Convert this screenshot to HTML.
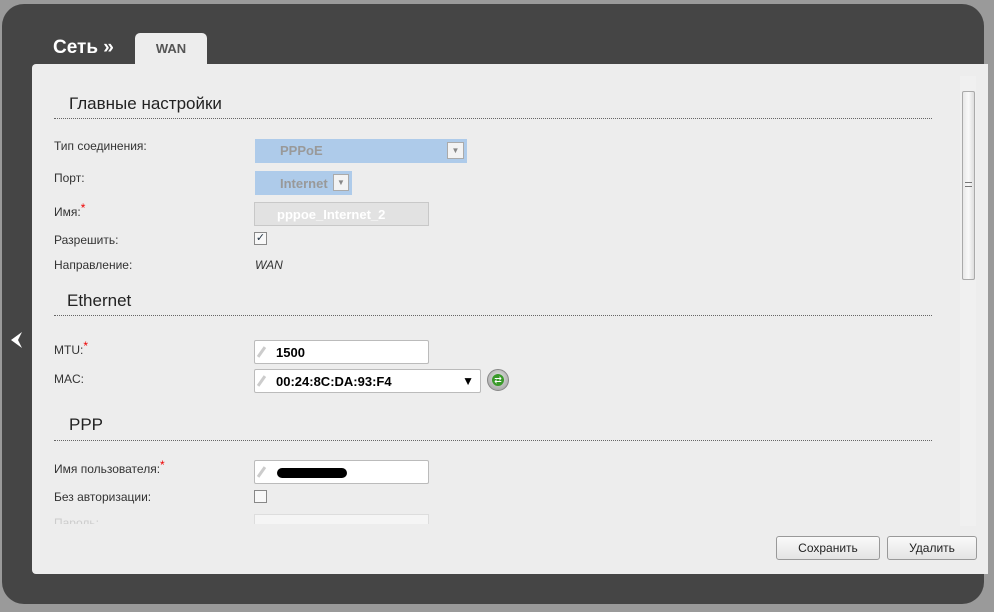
<!DOCTYPE html>
<html><head><meta charset="utf-8"><style>
*{margin:0;padding:0;box-sizing:border-box}
body{width:994px;height:612px;background:#9a9a9a;position:relative;overflow:hidden;font-family:"Liberation Sans",Arial,sans-serif}
.dark{position:absolute;left:2px;top:4px;width:982px;height:600px;background:#454545;border-radius:22px}
.panel{position:absolute;left:32px;top:64px;width:956px;height:510px;background:#ededed;border-radius:4px 0 0 4px}
.a{position:absolute}
.t{position:absolute;font-size:12px;color:#333}
.h{position:absolute;font-size:17px;color:#222}
.line{position:absolute;left:54px;width:878px;border-top:1px dotted #666}
.inp{position:absolute;background:#fff;border:1px solid #bbb;border-radius:2px;height:24px;font-size:13px;font-weight:bold;color:#000;padding:4px 0 0 21px}
.star{color:#e00;font-size:12px;position:relative;top:-4px}
.pen{position:absolute;left:5px;top:5px;width:3px;height:12px;background:#ccc;transform:rotate(35deg)}
.btn{position:absolute;top:536px;height:24px;border:1px solid #999;border-radius:3px;background:linear-gradient(#fafafa,#e4e4e4);font-size:12px;color:#222;text-align:center;line-height:22px}
</style></head><body>
<div class="dark"></div>
<div class="a" style="left:53px;top:37px;color:#fff;font-size:19px;font-weight:bold">Сеть »</div>
<div class="a" style="left:135px;top:33px;width:72px;height:32px;background:#ededed;border-radius:5px 5px 0 0;text-align:center;font-size:13px;font-weight:bold;color:#555;padding-top:8px">WAN</div>
<div class="panel"></div>
<svg class="a" style="left:9px;top:331px" width="16" height="18"><path d="M13 1 L2 9 L13 17 L9 9Z" fill="#fff"/></svg>
<div class="h" style="left:69px;top:94px">Главные настройки</div>
<div class="line" style="top:118px"></div>
<div class="t" style="left:54px;top:139px">Тип соединения:</div>
<div class="a" style="left:255px;top:139px;width:212px;height:24px;background:#aecbea;font-size:13px;font-weight:bold;color:#999;padding:4px 0 0 25px">PPPoE<span class="a" style="right:3px;top:3px;width:17px;height:17px;background:#f3f3f3;border:1px solid #aaa;font-size:8px;color:#888;text-align:center;line-height:16px">▼</span></div>
<div class="t" style="left:54px;top:171px">Порт:</div>
<div class="a" style="left:255px;top:171px;width:97px;height:24px;background:#aecbea;font-size:13px;font-weight:bold;color:#999;padding:5px 0 0 25px">Internet<span class="a" style="right:3px;top:3px;width:16px;height:17px;background:#f3f3f3;border:1px solid #aaa;font-size:8px;color:#888;text-align:center;line-height:16px">▼</span></div>
<div class="t" style="left:54px;top:205px">Имя:<span class="star">*</span></div>
<div class="a" style="left:254px;top:202px;width:175px;height:24px;background:#e2e2e2;border:1px solid #c8c8c8;font-size:13px;font-weight:bold;color:#fff;padding:4px 0 0 22px">pppoe_Internet_2</div>
<div class="t" style="left:54px;top:233px">Разрешить:</div>
<div class="a" style="left:254px;top:232px;width:13px;height:13px;border:1px solid #888;background:#f8f8f8;font-size:11px;color:#234;line-height:11px;text-align:center">✓</div>
<div class="t" style="left:54px;top:258px">Направление:</div>
<div class="t" style="left:255px;top:258px;font-style:italic">WAN</div>
<div class="h" style="left:67px;top:291px">Ethernet</div>
<div class="line" style="top:315px"></div>
<div class="t" style="left:54px;top:343px">MTU:<span class="star">*</span></div>
<div class="inp" style="left:254px;top:340px;width:175px"><span class="pen"></span>1500</div>
<div class="t" style="left:54px;top:372px">MAC:</div>
<div class="inp" style="left:254px;top:369px;width:227px"><span class="pen"></span>00:24:8C:DA:93:F4<span class="a" style="right:6px;top:4px;font-size:12px">▼</span></div>
<div class="a" style="left:487px;top:369px;width:22px;height:22px;border-radius:50%;background:radial-gradient(circle at 50% 40%,#e8e8e8,#999);border:1px solid #888"><div class="a" style="left:4px;top:4px;width:12px;height:12px;border-radius:50%;background:#3a9a2a;color:#fff;font-size:9px;line-height:12px;text-align:center">⇄</div></div>
<div class="h" style="left:69px;top:415px">PPP</div>
<div class="line" style="top:440px"></div>
<div class="t" style="left:54px;top:462px">Имя пользователя:<span class="star">*</span></div>
<div class="inp" style="left:254px;top:460px;width:175px"><span class="pen"></span><span class="a" style="left:22px;top:7px;width:70px;height:10px;background:#000;border-radius:6px"></span></div>
<div class="t" style="left:54px;top:490px">Без авторизации:</div>
<div class="a" style="left:254px;top:490px;width:13px;height:13px;border:1px solid #888;background:#f8f8f8"></div>
<div class="t" style="left:54px;top:516px;color:#ccc;height:8px;overflow:hidden">Пароль:</div>
<div class="a" style="left:254px;top:514px;width:175px;height:10px;border:1px solid #ddd;border-bottom:none;background:#f5f5f5"></div>
<div class="a" style="left:960px;top:76px;width:16px;height:450px;background:#f0f0f0"></div>
<div class="a" style="left:962px;top:91px;width:13px;height:189px;background:linear-gradient(90deg,#e8e8e8,#fafafa,#ddd);border:1px solid #aaa;border-radius:2px"></div>
<div class="a" style="left:965px;top:182px;width:7px;height:5px;border-top:1px solid #777;border-bottom:1px solid #777"></div>
<div class="btn" style="left:776px;width:104px">Сохранить</div>
<div class="btn" style="left:887px;width:90px">Удалить</div>
</body></html>
